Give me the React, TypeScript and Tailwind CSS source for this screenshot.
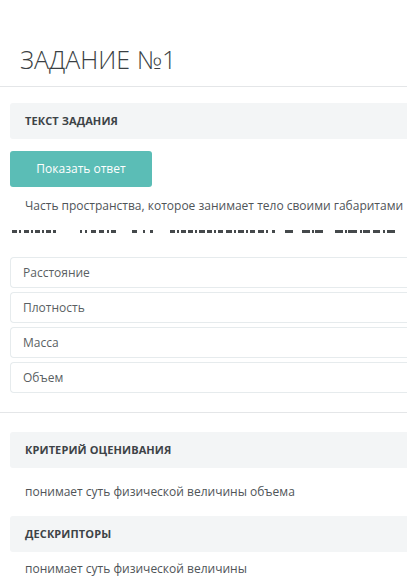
import React from "react";

const font = { fontFamily: '"Open Sans", "Noto Sans", sans-serif' };

// hidden answer: dashes and dots [x, width]
const dashes: [number, number][] = [
  [12, 5], [19, 2], [24, 5], [31, 2], [35, 5], [42, 2], [46, 5], [53, 3],
  [80, 2], [85, 2], [91, 5], [99, 5], [107, 2], [111, 5],
  [132, 5], [143, 2], [150, 3],
  [170, 5], [177, 2], [181, 5], [188, 5], [195, 2], [199, 6], [207, 5], [214, 2], [218, 5],
  [226, 6], [234, 2], [238, 6], [246, 2], [250, 5], [258, 6], [266, 2], [272, 3],
  [285, 8],
  [302, 8], [312, 2], [315, 8],
  [335, 8], [345, 2], [348, 9], [360, 2], [363, 7], [373, 7], [383, 2], [387, 8],
];

const Header: React.FC<{ title: string }> = ({ title }) => (
  <div className="ml-[10px] h-[36px] rounded-l-[3px] bg-[#f3f5f6] flex items-center pl-[15px]">
    <span className="text-[11px] font-bold text-[#3d4347] tracking-[0.1px]">{title}</span>
  </div>
);

const Option: React.FC<{ label: string }> = ({ label }) => (
  <div className="ml-[10px] h-[31px] rounded-l-[4px] border border-r-0 border-[#e6ebed] bg-white flex items-center pl-[12px]">
    <span className="text-[12px] text-[#5a5f63]">{label}</span>
  </div>
);

export default function App() {
  return (
    <div className="w-[407px] h-[587px] overflow-hidden bg-white" style={font}>
      <div className="h-[87px] border-b border-[#e4e6e8] flex items-end pb-[14px] pl-[20px]">
        <h1 className="text-[25px] font-light text-[#3a3f43] leading-none">ЗАДАНИЕ №1</h1>
      </div>

      <div className="pt-[16px]">
        <Header title="ТЕКСТ ЗАДАНИЯ" />
        <button className="ml-[10px] mt-[12px] w-[142px] h-[36px] rounded-[3px] bg-[#5bbdb6] text-white text-[12px] flex items-center justify-center">
          Показать ответ
        </button>
        <p className="pl-[25px] mt-[11px] text-[12px] text-[#4f5458] leading-[16px] whitespace-nowrap">
          Часть пространства, которое занимает тело своими габаритами
        </p>
        <svg width="407" height="6" className="block mt-[15px]">
          {dashes.map(([x, w], i) => (
            <rect key={i} x={x} y={1} width={w} height={3} fill="#45494c" />
          ))}
        </svg>
        <div className="mt-[22px] flex flex-col gap-[4px]">
          <Option label="Расстояние" />
          <Option label="Плотность" />
          <Option label="Масса" />
          <Option label="Объем" />
        </div>
      </div>

      <div className="mt-[19px] border-t border-[#e4e6e8] pt-[19px]">
        <Header title="КРИТЕРИЙ ОЦЕНИВАНИЯ" />
        <p className="pl-[25px] h-[48px] flex items-center text-[12px] text-[#4f5458]">
          понимает суть физической величины объема
        </p>
        <Header title="ДЕСКРИПТОРЫ" />
        <p className="pl-[25px] h-[34px] flex items-center text-[12px] text-[#4f5458]">
          понимает суть физической величины
        </p>
      </div>
    </div>
  );
}
